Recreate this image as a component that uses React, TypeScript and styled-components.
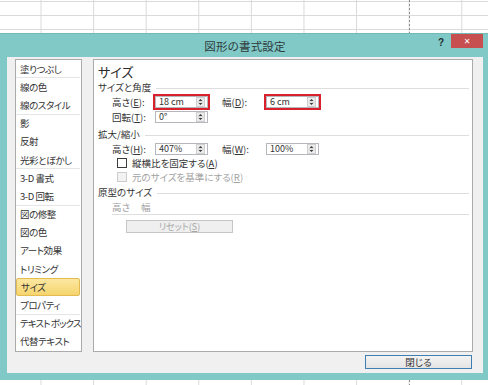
import styled, { createGlobalStyle } from "styled-components";

const GlobalStyle = createGlobalStyle`
  html, body { margin: 0; padding: 0; }
  body {
    width: 488px;
    height: 385px;
    overflow: hidden;
    font-family: "Noto Sans CJK JP", "Noto Sans", sans-serif;
    font-feature-settings: "palt";
    font-size: 9.5px;
    color: #333;
  }
`;

const categories = [
  { label: "塗りつぶし", sep: true },
  { label: "線の色" },
  { label: "線のスタイル", sep: true },
  { label: "影" },
  { label: "反射" },
  { label: "光彩とぼかし", sep: true },
  { label: "3-D 書式" },
  { label: "3-D 回転", sep: true },
  { label: "図の修整" },
  { label: "図の色" },
  { label: "アート効果" },
  { label: "トリミング" },
  { label: "サイズ", active: true },
  { label: "プロパティ", sep: true },
  { label: "テキスト ボックス", tight: true },
  { label: "代替テキスト" },
];

function Spinner() {
  return (
    <SpinBox>
      <svg width="9" height="10" viewBox="0 0 9 10">
        <line x1="0.5" y1="5" x2="8.5" y2="5" stroke="#c8c8c8" />
        <path d="M2 3.6 L4.5 1.2 L7 3.6 Z" fill="#3a3a3a" />
        <path d="M2 6.4 L4.5 8.8 L7 6.4 Z" fill="#3a3a3a" />
      </svg>
    </SpinBox>
  );
}

function NumField({ value, mark }: { value: string; mark?: boolean }) {
  return (
    <Field $mark={mark}>
      <span>{value}</span>
      <Spinner />
    </Field>
  );
}

export default function App() {
  return (
    <>
      <GlobalStyle />
      <Sheet>
        <Dialog>
          <TitleBar>
            <span />
            <Title>図形の書式設定</Title>
            <Controls>
              <Help>?</Help>
              <CloseBtn>✕</CloseBtn>
            </Controls>
          </TitleBar>

          <Content>
            <CatList>
              {categories.map((c) => (
                <CatItem
                  key={c.label}
                  $sep={c.sep}
                  $active={c.active}
                  $tight={c.tight}
                >
                  {c.label}
                </CatItem>
              ))}
            </CatList>

            <Panel>
              <Heading>サイズ</Heading>

              <GroupHead>サイズと角度</GroupHead>
              <Row>
                <Label>
                  高さ(<u>E</u>):
                </Label>
                <NumField value="18 cm" mark />
                <Label $gap>
                  幅(<u>D</u>):
                </Label>
                <NumField value="6 cm" mark />
              </Row>
              <Row>
                <Label>
                  回転(<u>T</u>):
                </Label>
                <NumField value="0°" />
              </Row>

              <GroupHead $top={4}>拡大/縮小</GroupHead>
              <Row>
                <Label>
                  高さ(<u>H</u>):
                </Label>
                <NumField value="407%" />
                <Label $gap>
                  幅(<u>W</u>):
                </Label>
                <NumField value="100%" />
              </Row>
              <CheckRow>
                <Box />
                <span>
                  縦横比を固定する(<u>A</u>)
                </span>
              </CheckRow>
              <CheckRow $disabled>
                <Box $disabled />
                <span>
                  元のサイズを基準にする(<u>R</u>)
                </span>
              </CheckRow>

              <GroupHead $top={2}>原型のサイズ</GroupHead>
              <OrigRow>
                <span>高さ</span>
                <span>幅</span>
              </OrigRow>
              <ResetBtn>
                <span>
                  リセット(<u>S</u>)
                </span>
              </ResetBtn>
            </Panel>

            <Footer>
              <CloseButton>閉じる</CloseButton>
            </Footer>
          </Content>
        </Dialog>
      </Sheet>
    </>
  );
}

const Sheet = styled.div`
  width: 488px;
  height: 385px;
  box-sizing: border-box;
  padding-top: 33px;
  background-color: #fff;
  background-image: repeating-linear-gradient(
      to bottom,
      #8c8c8c 0 2px,
      transparent 2px 4px
    ),
    linear-gradient(to right, #dadada 1px, transparent 1px),
    linear-gradient(to bottom, #dadada 1px, transparent 1px);
  background-size: 1px 100%, 52.6px 100%, 100% 14px;
  background-position: 409px 0, 40.5px 0, 0 1px;
  background-repeat: no-repeat, repeat-x, repeat-y;
`;

const Dialog = styled.div`
  height: 347px;
  box-sizing: border-box;
  padding: 0 5px 7px 7px;
  background: #80c9c7;
  border-top: 1px solid #72b9b7;
  display: flex;
  flex-direction: column;
`;

const TitleBar = styled.div`
  height: 23px;
  display: grid;
  grid-template-columns: 1fr auto 1fr;
  align-items: start;
`;

const Title = styled.div`
  font-size: 11.5px;
  color: #2e3b3b;
  padding-top: 4px;
  letter-spacing: 0.2px;
`;

const Controls = styled.div`
  justify-self: end;
  display: flex;
  align-items: flex-start;
  gap: 7px;
`;

const Help = styled.span`
  font-family: "Liberation Sans", Arial, sans-serif;
  font-weight: bold;
  font-size: 10px;
  color: #1f2f30;
  padding-top: 3px;
`;

const CloseBtn = styled.div`
  width: 32px;
  height: 14px;
  background: #c74f4f;
  color: #fff;
  font-family: "DejaVu Sans", sans-serif;
  font-size: 8px;
  font-weight: bold;
  display: grid;
  place-items: center;
`;

const Content = styled.div`
  flex: 1;
  background: #f0f0f0;
  padding: 2px 10px 4px 8px;
  display: grid;
  grid-template-columns: 67px 1fr;
  grid-template-rows: 293px auto;
  column-gap: 11px;
`;

const CatList = styled.div`
  background: #fff;
  border: 1px solid #ababab;
  display: flex;
  flex-direction: column;
`;

const CatItem = styled.div<{ $sep?: boolean; $active?: boolean; $tight?: boolean }>`
  height: 18.2px;
  box-sizing: border-box;
  display: flex;
  align-items: center;
  padding-left: 4px;
  white-space: nowrap;
  letter-spacing: ${({ $tight }) => ($tight ? "-0.9px" : "-0.45px")};
  border-bottom: 1px solid ${({ $sep }) => ($sep ? "#e6e6e6" : "transparent")};
  margin-right: 1px;
  ${({ $active }) =>
    $active &&
    `
    background: linear-gradient(#fbe7a1, #f6d56e);
    border: 1px solid #e3bb51;
    border-radius: 2px;
  `}
`;

const Panel = styled.div`
  background: #fff;
  border: 1px solid #ababab;
  padding-left: 4px;
  display: flex;
  flex-direction: column;
`;

const Heading = styled.div`
  font-size: 13px;
  height: 18px;
  line-height: 18px;
  margin-top: 3px;
  color: #2a2a2a;
`;

const GroupHead = styled.div<{ $top?: number }>`
  height: 13px;
  line-height: 13px;
  margin-top: ${({ $top }) => $top ?? 0}px;
  display: flex;
  align-items: center;
  white-space: nowrap;

  &::after {
    content: "";
    flex: 1;
    height: 1px;
    background: #dedede;
    margin: 1px 3px 0 5px;
  }
`;

const Row = styled.div`
  height: 15px;
  display: flex;
  align-items: center;
  padding-left: 14px;
`;

const Label = styled.span<{ $gap?: boolean }>`
  width: ${({ $gap }) => ($gap ? 44 : 43)}px;
  margin-left: ${({ $gap }) => ($gap ? 14 : 0)}px;
  white-space: nowrap;
`;

const Field = styled.div<{ $mark?: boolean }>`
  width: 53px;
  height: 12px;
  box-sizing: border-box;
  border: 1px solid #b5b7bd;
  background: #fff;
  display: flex;
  align-items: center;
  justify-content: space-between;
  padding: 0 1px 0 3px;
  font-size: 9px;
  outline: ${({ $mark }) => ($mark ? "2px solid #d8212c" : "none")};
  outline-offset: 0;
`;

const SpinBox = styled.span`
  width: 9px;
  height: 10px;
  display: flex;
  background: #ececec;
  border: 1px solid #cfcfcf;
  box-sizing: border-box;
  margin-right: 1px;

  svg {
    width: 7px;
    height: 8px;
  }
`;

const CheckRow = styled.div<{ $disabled?: boolean }>`
  height: 14px;
  display: flex;
  align-items: center;
  gap: 5px;
  padding-left: 19px;
  color: ${({ $disabled }) => ($disabled ? "#a2a2a2" : "#333")};
`;

const Box = styled.span<{ $disabled?: boolean }>`
  width: 10px;
  height: 10px;
  box-sizing: border-box;
  border: 1px solid ${({ $disabled }) => ($disabled ? "#cdcdcd" : "#3c3c3c")};
  background: ${({ $disabled }) => ($disabled ? "#f2f2f2" : "#fff")};
`;

const OrigRow = styled.div`
  height: 15px;
  display: flex;
  align-items: center;
  gap: 11px;
  margin: 0 3px 0 14px;
  border-bottom: 1px solid #dedede;
  color: #a2a2a2;
`;

const ResetBtn = styled.div`
  width: 107px;
  height: 13px;
  box-sizing: border-box;
  margin: 5px 0 0 28px;
  border: 1px solid #c6c6c6;
  background: #efefef;
  color: #a6a6a6;
  display: flex;
  align-items: center;
  justify-content: center;
  font-size: 9px;
`;

const Footer = styled.div`
  grid-column: 1 / -1;
  display: flex;
  justify-content: flex-end;
  padding: 3px 1px 0 0;
`;

const CloseButton = styled.div`
  width: 107px;
  height: 14px;
  box-sizing: border-box;
  border: 1px solid #3d7fb3;
  background: linear-gradient(#f3f3f3, #e4e4e4);
  display: flex;
  align-items: center;
  justify-content: center;
  font-size: 9.5px;
`;
